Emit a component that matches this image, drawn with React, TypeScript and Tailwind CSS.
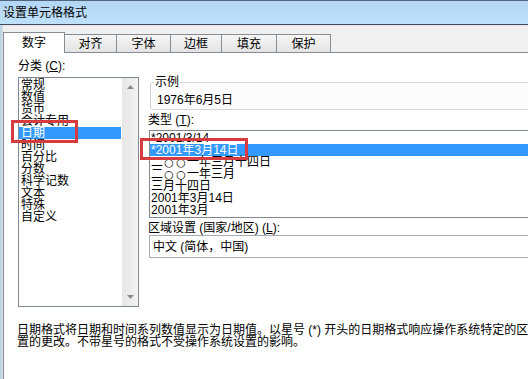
import React from "react";

const FONT = { fontFamily: '"Liberation Sans", "Noto Sans CJK SC", sans-serif' };

const categories = ["常规", "数值", "货币", "会计专用", "日期", "时间", "百分比", "分数", "科学记数", "文本", "特殊", "自定义"];
const types = ["*2001/3/14", "*2001年3月14日", "二○○一年三月十四日", "二○○一年三月", "三月十四日", "2001年3月14日", "2001年3月"];

function Tab({ label, w }: { label: string; w: string }) {
  return (
    <div
      className={`${w} h-[18px] -ml-px border border-b-0 border-[#898c95] bg-gradient-to-b from-[#f6f6f6] to-[#e3e3e3] flex items-center justify-center text-[12px] leading-[12px] text-black`}
    >
      {label}
    </div>
  );
}

function TypeText({ t }: { t: string }) {
  return (
    <>
      {t.split("").map((ch, i) =>
        ch === "○" ? (
          <span
            key={i}
            className="inline-block w-[12px] text-center text-[11px] leading-[12px] font-['DejaVu_Sans',sans-serif]"
          >
            ○
          </span>
        ) : (
          <React.Fragment key={i}>{ch}</React.Fragment>
        )
      )}
    </>
  );
}

export default function App() {
  return (
    <div className="w-[528px] h-[379px] overflow-hidden relative bg-white flex flex-col text-black" style={FONT}>
      {/* title bar */}
      <div className="h-[24px] shrink-0 border-t border-[#50667e] bg-gradient-to-b from-[#b3d6f5] to-[#bfe0fa] flex items-center pl-[3px] text-[12px] leading-[12px]">
        设置单元格格式
      </div>
      <div className="h-px shrink-0 bg-[#3a4b5c]" />
      <div className="flex flex-1 min-h-0">
        <div className="w-[3px] shrink-0 bg-gradient-to-r from-[#bccfe2] to-[#d3e0ec]" />
        <div className="flex-1 flex flex-col bg-[#f0f0f0] min-w-0">
          <div className="h-[2px] shrink-0 bg-[#f3eaed]" />
          {/* tab strip */}
          <div className="h-[26px] shrink-0 border-b border-[#898c95] flex items-end">
            <div className="w-[62px] h-[21px] -mb-px relative z-10 border border-b-0 border-[#898c95] bg-white flex items-start justify-center pt-[4px] text-[12px] leading-[12px]">
              数字
            </div>
            <Tab label="对齐" w="w-[53px]" />
            <Tab label="字体" w="w-[55px]" />
            <Tab label="边框" w="w-[52px]" />
            <Tab label="填充" w="w-[56px]" />
            <Tab label="保护" w="w-[55px]" />
          </div>
          {/* panel */}
          <div className="flex-1 bg-white border-l border-[#898c95] flex flex-col min-w-0">
            <div className="flex pt-[7px] pl-[14px] h-[254px] shrink-0">
              {/* left column */}
              <div className="w-[121px] shrink-0 flex flex-col">
                <div className="h-[12px] leading-[12px] text-[12px] mb-[5px] whitespace-nowrap">
                  分类 (<span className="underline">C</span>):
                </div>
                <div className="h-[231px] border border-[#828790] flex">
                  <div className="flex-1 pt-px flex flex-col">
                    {categories.map((c) => (
                      <div
                        key={c}
                        className={`h-[12px] leading-[12px] text-[12px] pl-[2px] mr-px whitespace-nowrap ${
                          c === "日期" ? "bg-[#3399ff] text-white" : ""
                        }`}
                      >
                        {c}
                      </div>
                    ))}
                  </div>
                  <div className="w-[16px] bg-gradient-to-r from-[#e6e6e6] to-[#f2f2f2] flex flex-col items-center justify-between py-[7px]">
                    <svg width="7" height="4" viewBox="0 0 7 4">
                      <path d="M3.5 0 L7 4 L0 4 Z" fill="#8a8a8a" />
                    </svg>
                    <svg width="7" height="4" viewBox="0 0 7 4">
                      <path d="M0 0 L7 0 L3.5 4 Z" fill="#8a8a8a" />
                    </svg>
                  </div>
                </div>
              </div>
              {/* right column */}
              <div className="ml-[9px] w-[420px] shrink-0 flex flex-col">
                <div className="mt-[22px] ml-[2px] h-[28px] border border-[#d5d5d5] rounded-[3px] relative bg-[#fcfcfc] pl-[6px] pt-[11px]">
                  <div className="absolute left-[3px] top-[-7px] bg-white px-[1px] text-[12px] leading-[12px]">示例</div>
                  <div className="text-[12px] leading-[12px] whitespace-nowrap">1976年6月5日</div>
                </div>
                <div className="mt-[4px] h-[12px] text-[12px] leading-[12px] whitespace-nowrap">
                  类型 (<span className="underline">T</span>):
                </div>
                <div className="mt-[4px] ml-px h-[88px] border border-[#828790] pt-px flex flex-col">
                  {types.map((t, i) => (
                    <div
                      key={t}
                      className={`h-[12px] leading-[12px] text-[12px] pl-[1px] whitespace-nowrap ${
                        i === 1 ? "bg-[#3399ff] text-white" : ""
                      }`}
                    >
                      <TypeText t={t} />
                    </div>
                  ))}
                </div>
                <div className="mt-[4px] h-[12px] text-[12px] leading-[12px] whitespace-nowrap">
                  区域设置 (国家/地区) (<span className="underline">L</span>):
                </div>
                <div className="mt-[1px] ml-px h-[23px] border border-[#a5acb5] flex items-center pl-[3px] text-[12px] leading-[12px] whitespace-nowrap">
                  中文 (简体，中国)
                </div>
              </div>
            </div>
            <div className="mt-[17px] ml-[13px] text-[12px] leading-[12px] whitespace-nowrap">
              <div>日期格式将日期和时间系列数值显示为日期值。以星号 (*) 开头的日期格式响应操作系统特定的区域</div>
              <div>置的更改。不带星号的格式不受操作系统设置的影响。</div>
            </div>
          </div>
        </div>
      </div>

      {/* red annotation boxes */}
      <div className="absolute left-[11px] top-[120px] w-[67px] h-[23px] border-[3px] border-[#d63b3f] pointer-events-none" />
      <div className="absolute left-[140px] top-[138px] w-[108px] h-[22px] border-[3px] border-[#d63b3f] pointer-events-none" />
    </div>
  );
}
